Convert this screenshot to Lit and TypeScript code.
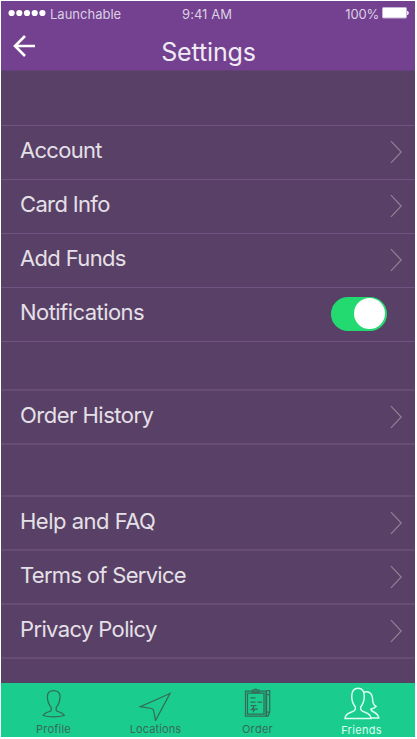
import { LitElement, html, css, svg } from "lit";
import { customElement, property } from "lit/decorators.js";

@customElement("settings-row")
class SettingsRow extends LitElement {
  @property() label = "";
  @property() kind = "link";
  @property() spacing = "0";
  static styles = css`
    :host { display: flex; box-sizing: border-box; height: 54px; border-bottom: 1px solid #705381; padding: 0 13px 0 19px; align-items: center; justify-content: space-between; }
    :host(.soft) { border-bottom: 2px solid #674c76; }
    .label { font-size: 22px; line-height: 28px; color: #e5e0e8; padding-bottom: 5px; white-space: nowrap; }
    :host(.soft) .label { padding-bottom: 4px; }
    .chevron { display: block; margin-bottom: 1px; }
    .switch { width: 52px; height: 30px; border: 2px solid #23da70; background: #23da70; border-radius: 17px; display: flex; justify-content: flex-end; margin: 0 15px 2px 0; }
    .knob { width: 31px; height: 31px; border-radius: 50%; background: #fff; margin-top: -0.5px; }
  `;
  render() {
    return html`<span class="label" style="letter-spacing:${this.spacing}px">${this.label}</span>
      ${this.kind === "switch"
        ? html`<div class="switch"><div class="knob"></div></div>`
        : html`<svg class="chevron" width="13" height="24" viewBox="0 0 13 24" fill="none" stroke="#8f8195" stroke-width="1.2"><path d="M2 1.2L12.2 12L2 22.8" /></svg>`}`;
  }
}

const stroke = (d: string) => svg`<path d=${d} />`;

const tabs = [
  { name: "Profile", space: 0.2, icon: [
    "M14 22.5V19.5C11.5 16.5 10.2 12 10.2 8.5C10.2 4.5 12.5 2.5 16.5 2.5S22.8 4.5 22.8 8.5C22.8 12 21.5 16.5 19 19.5V22.5C20.3 24.3 26 24 27 27.5C21.5 29.3 11.5 29.3 6 27.5C7 24 12.7 24.3 14 22.5Z",
  ] },
  { name: "Locations", space: 0.12, icon: ["M31 4.5L1.3 17.7L12.5 19.5Q14.5 20 14.7 22L16.5 31.5Z"] },
  { name: "Order", space: 0.3, icon: [
    "M4.5 3.5H25V28.5H4.5Z M6.5 5.5H23V26.5H6.5Z",
    "M11.5 5V2.6H13.2Q14.7 0.8 16.2 2.6H18V5H11.5Z",
    "M25.5 3H28.7V24.5L27 28.5H25.5V3M25.5 7H28.7M25.5 24.5H28.7",
    "M9.5 10.3H14.5M9.5 14.5H14.5M16.5 14.5H21M9.5 18H15.5M9.5 22H11L12.5 19.7V23.5L14 21.5H17",
  ] },
  { name: "Friends", space: 0.3, icon: [
    "M12.3 22.5V20C10.2 17.2 8.7 14 8.7 9.2C8.7 4 11.2 1.3 15 1.3S21.3 4 21.3 9.2C21.3 14 19.8 17.2 17.7 20V22.5C19.5 26.3 27.5 24.2 28 31.5H2C2.5 24.2 10.5 26.3 12.3 22.5Z",
    "M20.5 5.2C25.5 3.5 29.5 6 29.6 12.5C29.7 16 31.3 18.5 33 19.5C31.5 21.2 29.8 21.8 28 22C27.5 25.5 35 24.5 35.8 31H28",
  ] },
];

@customElement("app-root")
class AppRoot extends LitElement {
  static styles = css`
    :host { display: block; box-sizing: border-box; width: 417px; height: 739px; padding: 1px 2px 2px 1px; background: #fff; font-family: Inter, "Liberation Sans", sans-serif; overflow: hidden; }
    .screen { height: 736px; background: #594066; display: flex; flex-direction: column; }
    header { height: 70px; background: #734190; color: #f0eaf4; border-bottom: 1px solid #664079; box-sizing: border-box; }
    .status { display: grid; grid-template-columns: 1fr auto 1fr; height: 25px; align-items: center; font-size: 13px; line-height: 16px; color: #dccfe4; padding: 0 7px 0 7px; margin-right: -1px; }
    .carrier, .power { display: flex; align-items: center; }
    .dots { display: block; margin-right: 4px; margin-bottom: 2px; }
    .time { letter-spacing: 0.05px; margin-left: -3px; }
    .power { justify-content: flex-end; gap: 3px; letter-spacing: -0.2px; }
    .battery { display: block; margin-bottom: 2px; }
    .nav { display: grid; grid-template-columns: 40px 1fr 40px; height: 43px; align-items: center; }
    .back { display: block; margin: -3px 0 0 11px; }
    h1 { margin: 8px 0 0 1px; font-size: 25px; line-height: 32px; font-weight: 400; text-align: center; letter-spacing: -0.15px; }
    .group { border-top: 1px solid #705381; }
    .first { margin-top: 54px; }
    .second { margin-top: 47px; border-top: 2px solid #674c76; }
    .third { margin-top: 50px; border-top: 2px solid #674c76; }
    nav { margin-top: auto; height: 54px; background: #1acd8f; display: flex; color: #356b5a; }
    .tab { width: 102px; display: flex; flex-direction: column; align-items: center; padding-left: 3px; box-sizing: border-box; flex: none; }
    .tab svg { display: block; margin-top: 4px; }
    .tab span { font-size: 11px; line-height: 14px; margin-top: 1px; }
    .tab.active { color: #dbfff0; margin-left: 2px; }
    .tab.active span { margin-top: 2px; }
  `;
  row(label: string, spacing: number, kind = "link", soft = false) {
    return html`<settings-row class=${soft ? "soft" : ""} .label=${label} .spacing=${String(spacing)} .kind=${kind}></settings-row>`;
  }
  render() {
    return html`<div class="screen">
      <header>
        <div class="status">
          <div class="carrier">
            <svg class="dots" width="38" height="8" viewBox="0 0 38 8" fill="#fff">${[0, 1, 2, 3, 4].map((n) => svg`<circle cx=${3.6 + n * 7.7} cy="4" r="3.1" />`)}</svg>
            <span>Launchable</span>
          </div>
          <span class="time">9:41 AM</span>
          <div class="power"><span>100%</span>
            <svg class="battery" width="27" height="12" viewBox="0 0 27 12"><rect x=".5" y=".5" width="24" height="10.5" rx="1" fill="#fff" stroke="#c7b3d3" /><path d="M25.5 4Q27.5 6 25.5 8Z" fill="#fff" stroke="#fff" stroke-width=".6" /></svg>
          </div>
        </div>
        <div class="nav">
          <svg class="back" width="24" height="24" viewBox="0 0 24 24" fill="none" stroke="#fff" stroke-width="2.6"><path d="M13 2L3 12L13 22M3 12H23" /></svg>
          <h1>Settings</h1>
        </div>
      </header>
      <div class="group first">
        ${this.row("Account", -0.7)}${this.row("Card Info", -0.65)}${this.row("Add Funds", -0.65)}${this.row("Notifications", -0.55, "switch")}
      </div>
      <div class="group second">${this.row("Order History", -0.5, "link", true)}</div>
      <div class="group third">
        ${this.row("Help and FAQ", -0.5, "link", true)}${this.row("Terms of Service", -0.7, "link", true)}${this.row("Privacy Policy", -0.63, "link", true)}
      </div>
      <nav>
        ${tabs.map((t, i) => html`<div class="tab ${i === 3 ? "active" : ""}">
          <svg width="38" height="34" viewBox=${["-2.2 -1 38 34", "-2 -2 38 34", "-2 -.5 38 34", "0 0 38 34"][i]} fill="none" stroke="currentColor" stroke-width=${i === 3 ? 1.5 : 1.25}>${t.icon.map(stroke)}</svg>
          <span style="letter-spacing:${t.space}px">${t.name}</span>
        </div>`)}
      </nav>
    </div>`;
  }
}
